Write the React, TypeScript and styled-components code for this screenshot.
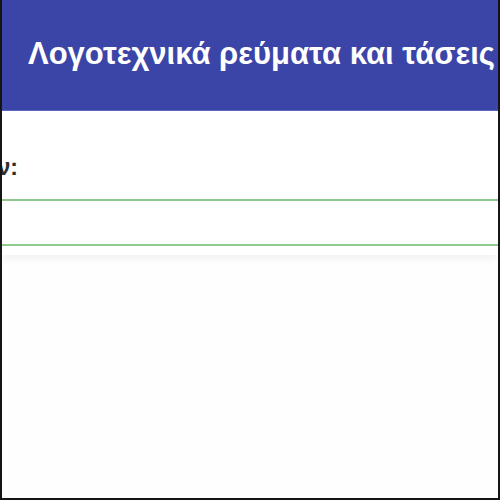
import React from "react";
import styled, { createGlobalStyle } from "styled-components";

const GlobalStyle = createGlobalStyle`
  html, body {
    margin: 0;
    padding: 0;
    background: #ffffff;
  }
  * {
    box-sizing: border-box;
  }
`;

const Frame = styled.div`
  width: 500px;
  height: 500px;
  display: flex;
  flex-direction: column;
  border: 2px solid #151515;
  border-top: none;
  overflow: hidden;
  background: #fefefe;
  font-family: "Liberation Sans", Arial, sans-serif;
`;

const Header = styled.header`
  height: 111px;
  flex: none;
  display: flex;
  align-items: center;
  padding: 0 0 2px 26px;
  background: #3b45a8;
  border-bottom: 1px solid #6068c0;
  color: #ffffff;
  font-size: 31px;
  font-weight: 700;
  white-space: nowrap;
`;

const Card = styled.section`
  display: flex;
  flex-direction: column;
  padding-top: 43px;
  padding-bottom: 9px;
  background: #ffffff;
  box-shadow: 0 4px 8px rgba(0, 0, 0, 0.05);
`;

const LabelRow = styled.div`
  width: 16px;
  display: flex;
  justify-content: flex-end;
  white-space: nowrap;
`;

const Label = styled.label`
  font-size: 23px;
  font-weight: 700;
  color: #2f2f2f;
  line-height: 26px;
`;

const Field = styled.div`
  margin-top: 19px;
  height: 47px;
  border-top: 2px solid #8ec98e;
  border-bottom: 2px solid #8ec98e;
  background: #ffffff;
`;

const App: React.FC = () => {
  return (
    <>
      <GlobalStyle />
      <Frame>
        <Header>Λογοτεχνικά ρεύματα και τάσεις</Header>
        <Card>
          <LabelRow>
            <Label>Συμπληρώστε την απάντησή σας στο πεδίο των ερωτήσεων:</Label>
          </LabelRow>
          <Field />
        </Card>
      </Frame>
    </>
  );
};

export default App;
